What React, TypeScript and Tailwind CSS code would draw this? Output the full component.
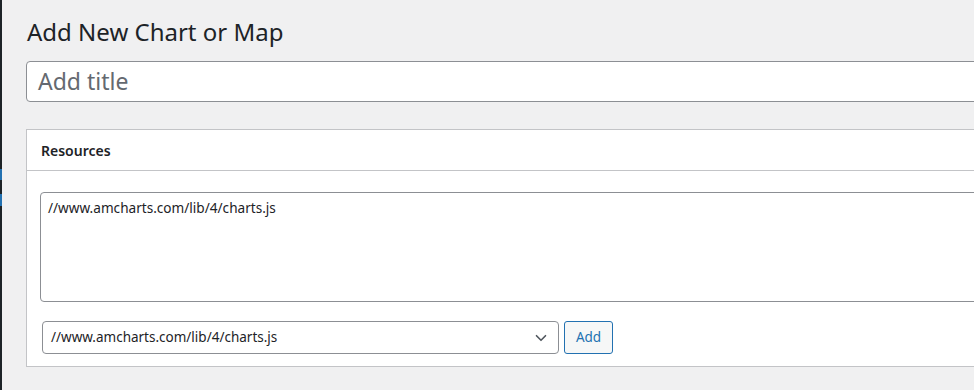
import { ChevronDown } from 'lucide-react';

export default function App() {
  return (
    <div className="relative h-[390px] w-full overflow-hidden bg-[#f0f0f1] font-['Noto_Sans',sans-serif] text-[#1d2327]">
      {/* admin menu edge */}
      <div className="absolute left-0 top-0 flex h-full w-[2px] flex-col bg-[#1d2327]">
        <div className="mt-[169px] h-[11px] w-full bg-[#2271b1]" />
        <div className="mt-[14px] h-[12px] w-full bg-[#2271b1]" />
      </div>

      <div className="mr-[-60px] pl-[26px] pt-[14px]">
        <h1 className="pl-[1px] text-[24px] font-normal leading-[36px]">Add New Chart or Map</h1>

        {/* title */}
        <div className="mt-[11px] flex h-[41px] items-center rounded-[4px] border border-[#8c8f94] bg-white pl-[11px]">
          <span className="text-[23px] leading-none text-[#646970]">Add title</span>
        </div>

        {/* Resources box */}
        <div className="mt-[27px] h-[238px] border border-[#c3c4c7] bg-white">
          <div className="flex h-[41px] items-center border-b border-[#c3c4c7] pl-[14px]">
            <h2 className="text-[14px] font-semibold">Resources</h2>
          </div>
          <div className="pl-[13px] pt-[21px]">
            <div className="h-[110px] rounded-[4px] border border-[#8c8f94] bg-white px-[7px] pt-[5px] text-[13.6px] leading-[20px]">
              //www.amcharts.com/lib/4/charts.js
            </div>
            <div className="mt-[19px] flex items-center gap-[5px] pl-[2px]">
              <div className="flex h-[33px] w-[517px] items-center justify-between rounded-[4px] border border-[#8c8f94] bg-white pl-[8px] pr-[8px] text-[13.5px]">
                <span>//www.amcharts.com/lib/4/charts.js</span>
                <ChevronDown size={18} strokeWidth={2.2} className="text-[#50575e]" />
              </div>
              <button className="h-[33px] w-[49px] rounded-[3px] border border-[#2271b1] bg-[#f6f7f7] text-[13.5px] text-[#2271b1]">
                Add
              </button>
            </div>
          </div>
        </div>
      </div>
    </div>
  );
}
